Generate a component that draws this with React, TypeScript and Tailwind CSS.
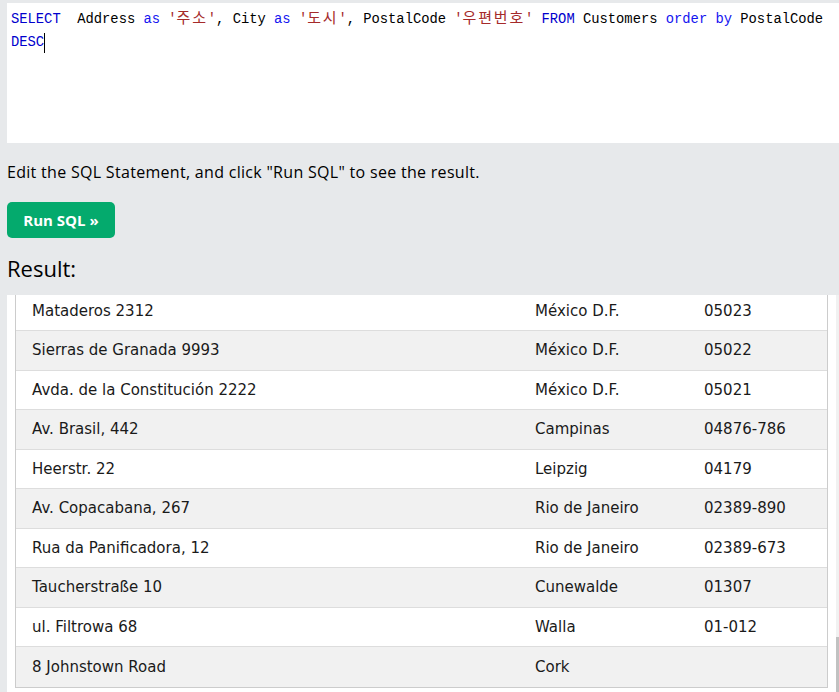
import React from "react";

const rows: [string, string, string][] = [
  ["Mataderos 2312", "México D.F.", "05023"],
  ["Sierras de Granada 9993", "México D.F.", "05022"],
  ["Avda. de la Constitución 2222", "México D.F.", "05021"],
  ["Av. Brasil, 442", "Campinas", "04876-786"],
  ["Heerstr. 22", "Leipzig", "04179"],
  ["Av. Copacabana, 267", "Rio de Janeiro", "02389-890"],
  ["Rua da Panificadora, 12", "Rio de Janeiro", "02389-673"],
  ["Taucherstraße 10", "Cunewalde", "01307"],
  ["ul. Filtrowa 68", "Walla", "01-012"],
  ["8 Johnstown Road", "Cork", ""],
];

const K = ({ children }: { children: React.ReactNode }) => (
  <span className="text-[#0000cd]">{children}</span>
);
const K2 = ({ children }: { children: React.ReactNode }) => (
  <span className="text-[#1515f0]">{children}</span>
);
const S = ({ ko }: { ko: string }) => (
  <span className="text-[#a52a2a]">
    '
    <span className="text-[15px] tracking-[1.8px] [font-family:'Noto_Sans_CJK_KR',sans-serif]">{ko}</span>
    '
  </span>
);

export default function App() {
  return (
    <div className="w-[839px] h-[692px] overflow-hidden bg-[#e7e9eb] flex flex-col pl-[7px] pt-[3px]">
      <div className="h-[140px] bg-white pl-[4px] pt-[2px] text-[13.8px] leading-[23px] text-black whitespace-pre [font-family:'Liberation_Mono',monospace]">
        <div>
          <K>SELECT</K>{"  Address "}<K2>as</K2>{" "}<S ko="주소" />{", City "}<K2>as</K2>{" "}
          <S ko="도시" />{", PostalCode "}<S ko="우편번호" />{" "}<K>FROM</K>{" Customers "}
          <K2>order</K2>{" "}<K2>by</K2>{" PostalCode"}
        </div>
        <div className="flex items-center">
          <K>DESC</K>
          <span className="inline-block w-px h-[20px] bg-black" />
        </div>
      </div>

      <p className="mt-[18px] text-[16px] tracking-[0.3px] leading-[22px] text-black [font-family:'Open_Sans',sans-serif]">
        Edit the SQL Statement, and click "Run SQL" to see the result.
      </p>

      <div className="mt-[19px]">
        <button className="w-[108px] h-[36px] rounded-[5px] bg-[#04aa6d] text-white text-[15px] font-bold [font-family:'Open_Sans',sans-serif]">
          Run SQL »
        </button>
      </div>

      <h2 className="mt-[15px] text-[22px] leading-[30px] text-black [font-family:'Open_Sans',sans-serif]">
        Result:
      </h2>

      <div className="mt-[12px] flex-1 bg-white flex min-h-0">
        <div className="flex-1 pl-[8px] pr-[8px] overflow-hidden">
          <div className="-mt-[3.5px] border-x border-b border-[#cccccc] text-[15px] text-[#1a1a1a] [font-family:'DejaVu_Sans',Verdana,sans-serif]">
            {rows.map((r, i) => (
              <div
                key={i}
                className={`grid grid-cols-[511px_169px_1fr] h-[39.5px] items-center border-b border-[#dddddd] last:border-b-0 ${
                  i % 2 === 0 ? "bg-white" : "bg-[#f1f1f1]"
                }`}
              >
                <div className="pl-[16px] whitespace-pre">{r[0]}</div>
                <div className="pl-[8px]">{r[1]}</div>
                <div className="pl-[8px]">{r[2]}</div>
              </div>
            ))}
          </div>
        </div>
        <div className="w-[3px] bg-[#f1f1f1] flex flex-col justify-end">
          <div className="h-[55px] bg-[#c1c1c1]" />
        </div>
      </div>
    </div>
  );
}
